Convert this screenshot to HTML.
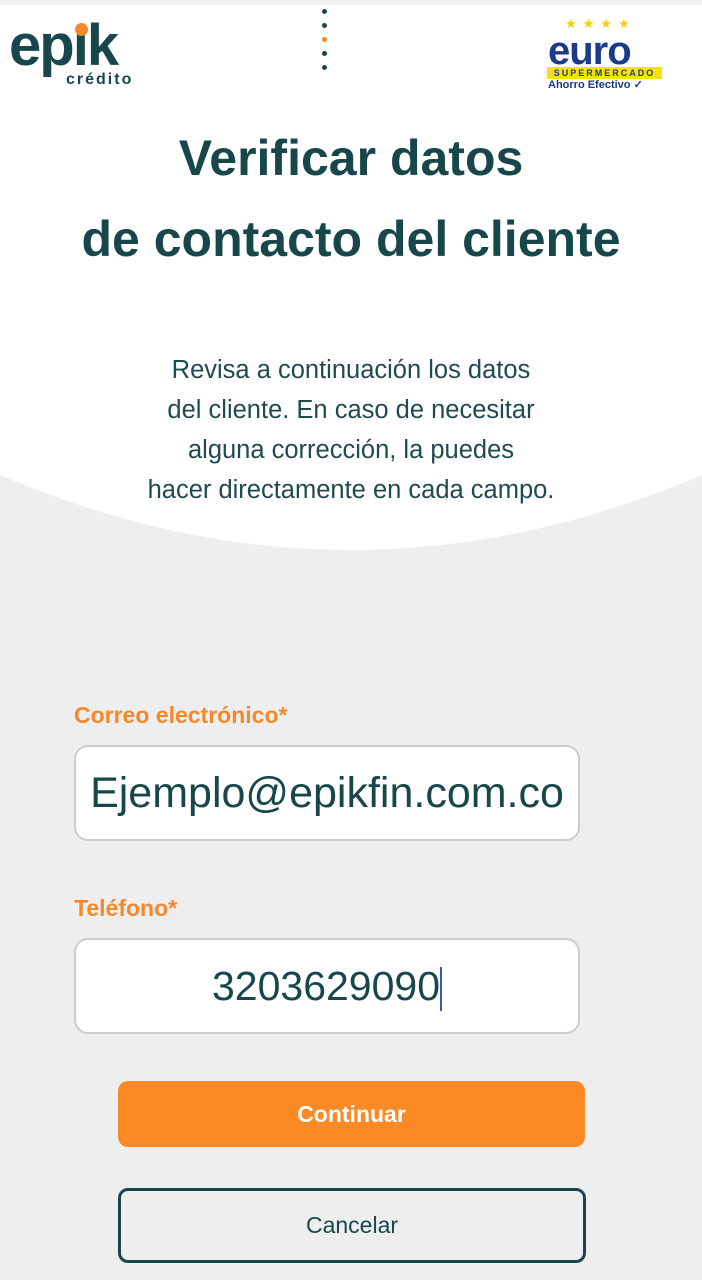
<!DOCTYPE html>
<html><head><meta charset="utf-8"><style>
body{margin:0;width:702px;height:1280px;background:#eeeeee;position:relative;overflow:hidden;font-family:"Liberation Sans",Roboto,sans-serif;}
.a{position:absolute}
h1{position:absolute;top:118px;left:0;width:702px;margin:0;text-align:center;color:#17474b;font-size:50px;line-height:81px;font-weight:bold}
.p{top:350px;left:0;width:702px;text-align:center;color:#1f4a4e;font-size:25.5px;line-height:40px}
.lab{color:#f5892a;font-weight:bold;font-size:23px}
.in{left:74px;width:502px;background:#fff;border:2px solid #ccc;border-radius:14px;color:#17474b;text-align:center}
</style></head><body>
<svg class="a" style="left:0;top:0" width="702" height="600"><path d="M0 0H702V475Q351 625 0 475Z" fill="#fff"/><rect width="702" height="5" fill="#f2f2f2"/></svg>
<div class="a" style="left:9px;top:16px;color:#17474b;font-size:58px;font-weight:bold;letter-spacing:-2px;line-height:60px">ep<span style="position:relative">ı<span style="position:absolute;left:2px;top:10px;width:13px;height:13px;border-radius:50%;background:#f5892a"></span></span>k</div>
<div class="a" style="left:66px;top:71px;color:#17474b;font-size:16px;font-weight:bold;letter-spacing:2px">crédito</div>
<div class="a" style="left:322px;top:9px;width:5px;height:5px;border-radius:50%;background:#17474b;box-shadow:0 14px 0 #17474b,0 28px 0 #f5892a,0 42px 0 #17474b,0 56px 0 #17474b"></div>
<div class="a" style="left:565px;top:16px;color:#f5d000;font-size:13px;letter-spacing:6px">★★★★</div>
<div class="a" style="left:548px;top:32px;color:#1a3a8a;font-size:40px;font-weight:bold;line-height:38px;letter-spacing:-1px">euro</div>
<div class="a" style="left:547px;top:67px;width:115px;height:12px;background:#f5e400;color:#1a3a8a;font-size:9px;font-weight:bold;letter-spacing:2px;text-align:center;line-height:12px">SUPERMERCADO</div>
<div class="a" style="left:548px;top:78px;color:#1a3a8a;font-size:11px;font-weight:bold">Ahorro Efectivo ✓</div>
<h1>Verificar datos<br>de contacto del cliente</h1>
<div class="a p">Revisa a continuación los datos<br>del cliente. En caso de necesitar<br>alguna corrección, la puedes<br>hacer directamente en cada campo.</div>
<div class="a lab" style="left:74px;top:702px">Correo electrónico*</div>
<div class="a in" style="top:745px;height:92px;line-height:92px;font-size:43px">Ejemplo@epikfin.com.co</div>
<div class="a lab" style="left:74px;top:895px">Teléfono*</div>
<div class="a in" style="top:938px;height:92px;line-height:92px;font-size:41px">3203629090<span style="display:inline-block;width:2px;height:44px;background:#3a57c0;vertical-align:middle"></span></div>
<div class="a" style="left:118px;top:1081px;width:467px;height:66px;background:#f98a25;border-radius:10px;color:#fff;font-weight:bold;font-size:23px;text-align:center;line-height:66px">Continuar</div>
<div class="a" style="left:118px;top:1188px;width:462px;height:69px;border:3px solid #17474b;border-radius:10px;color:#17474b;font-size:23px;text-align:center;line-height:69px">Cancelar</div>
</body></html>
